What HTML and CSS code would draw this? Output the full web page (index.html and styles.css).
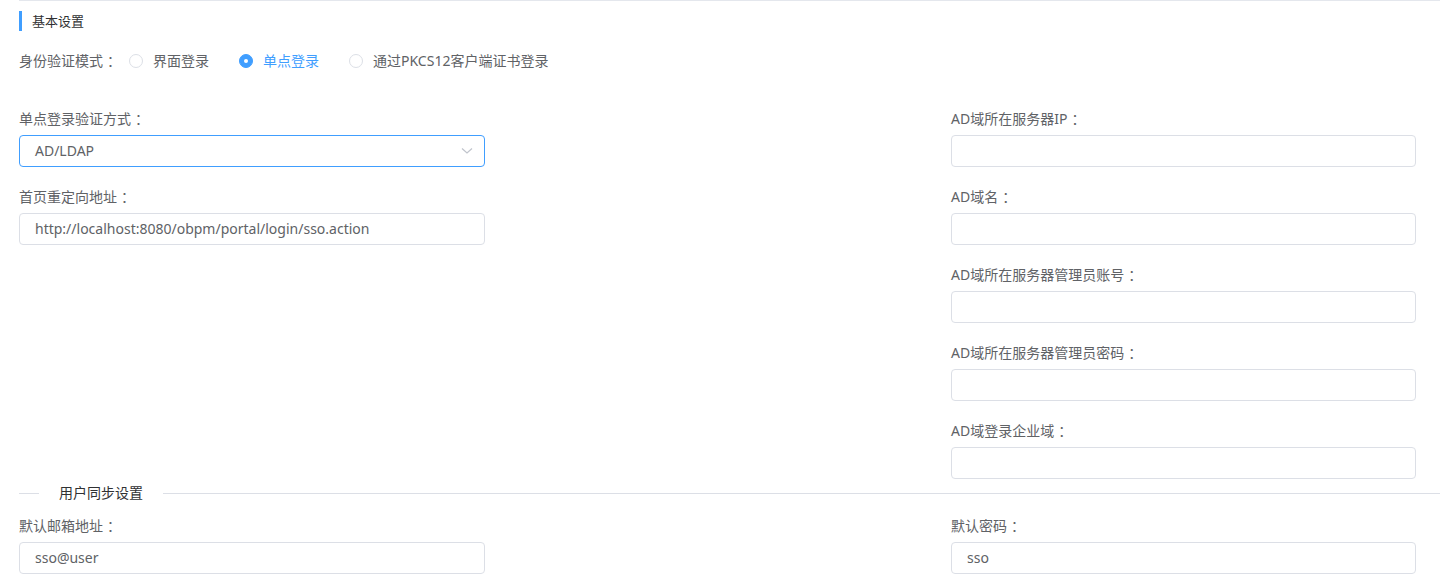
FILE: index.html
```html
<!DOCTYPE html>
<html lang="zh-CN">
<head>
<meta charset="UTF-8" />
<meta name="viewport" content="width=device-width, initial-scale=1" />
<title>基本设置</title>
<link rel="stylesheet" href="styles.css">
</head>
<body>
  <div class="page">
    <div class="panel">
      <h3 class="section-title">基本设置</h3>

      <div class="radio-row">
        <span class="radio-label">身份验证模式<span class="colon">：</span></span>
        <label class="radio">
          <span class="radio-inner"></span>
          <span class="radio-text">界面登录</span>
        </label>
        <label class="radio checked">
          <span class="radio-inner"></span>
          <span class="radio-text">单点登录</span>
        </label>
        <label class="radio">
          <span class="radio-inner"></span>
          <span class="radio-text">通过PKCS12客户端证书登录</span>
        </label>
      </div>

      <div class="form-grid">
        <div class="form-col">
          <div class="field">
            <div class="field-label">单点登录验证方式<span class="colon">：</span></div>
            <div class="select">
              <span>AD/LDAP</span>
              <svg class="select-arrow" width="12" height="8" viewBox="0 0 12 8">
                <path d="M1 1.5 L6 6 L11 1.5" fill="none" stroke="#c0c4cc" stroke-width="1.2"/>
              </svg>
            </div>
          </div>
          <div class="field">
            <div class="field-label">首页重定向地址<span class="colon">：</span></div>
            <div class="input">http://localhost:8080/obpm/portal/login/sso.action</div>
          </div>
        </div>

        <div class="form-col">
          <div class="field">
            <div class="field-label">AD域所在服务器IP<span class="colon">：</span></div>
            <div class="input"></div>
          </div>
          <div class="field">
            <div class="field-label">AD域名<span class="colon">：</span></div>
            <div class="input"></div>
          </div>
          <div class="field">
            <div class="field-label">AD域所在服务器管理员账号<span class="colon">：</span></div>
            <div class="input"></div>
          </div>
          <div class="field">
            <div class="field-label">AD域所在服务器管理员密码<span class="colon">：</span></div>
            <div class="input"></div>
          </div>
          <div class="field">
            <div class="field-label">AD域登录企业域<span class="colon">：</span></div>
            <div class="input"></div>
          </div>
        </div>
      </div>

      <div class="divider">
        <span class="divider-text">用户同步设置</span>
      </div>

      <div class="form-grid">
        <div class="form-col">
          <div class="field">
            <div class="field-label">默认邮箱地址<span class="colon">：</span></div>
            <div class="input">sso@user</div>
          </div>
        </div>
        <div class="form-col">
          <div class="field">
            <div class="field-label">默认密码<span class="colon">：</span></div>
            <div class="input">sso</div>
          </div>
        </div>
      </div>
    </div>
  </div>
</body>
</html>
```

FILE: styles.css
```css
body {
  margin: 0;
  padding: 0;
  background: #fff;
  font-family: "Noto Sans", "Noto Sans CJK SC", sans-serif;
  font-size: 14px;
  color: #606266;
}
.page {
  padding-left: 19px;
}
.panel {
  border-top: 1px solid #e4e7ed;
}

/* заголовок секції */
.section-title {
  margin: 10px 0 0 0;
  border-left: 3px solid #409eff;
  padding-left: 10px;
  height: 20px;
  line-height: 20px;
  font-size: 13px;
  font-weight: normal;
  color: #303133;
}

/* двокрапка по центру клітинки, як у YaHei */
.colon {
  padding-left: 4px;
  margin-right: -4px;
}

/* радіо */
.radio-row {
  display: flex;
  align-items: center;
  margin-top: 19px;
  height: 22px;
  line-height: 22px;
  white-space: nowrap;
}
.radio-label {
  flex-shrink: 0;
  margin-right: 12px;
}
.radio {
  display: flex;
  align-items: center;
  margin-right: 30px;
  cursor: pointer;
}
.radio-inner {
  box-sizing: border-box;
  width: 14px;
  height: 14px;
  border: 1px solid #dcdfe6;
  border-radius: 50%;
  position: relative;
}
.radio-text {
  padding-left: 10px;
}
.radio.checked .radio-inner {
  background: #409eff;
  border-color: #409eff;
}
.radio.checked .radio-inner::after {
  content: "";
  position: absolute;
  left: 4px;
  top: 4px;
  width: 4px;
  height: 4px;
  border-radius: 50%;
  background: #fff;
}
.radio.checked .radio-text {
  color: #409eff;
}

/* форма */
.form-grid {
  display: grid;
  grid-template-columns: 466px 465px;
  column-gap: 466px;
  margin-top: 36px;
}
.form-col {
  display: flex;
  flex-direction: column;
  gap: 19px;
}
.field-label {
  height: 22px;
  line-height: 22px;
  margin-bottom: 5px;
  white-space: nowrap;
}
.input,
.select {
  box-sizing: border-box;
  height: 32px;
  line-height: 30px;
  border: 1px solid #dcdfe6;
  border-radius: 4px;
  padding: 0 15px;
  color: #606266;
  background: #fff;
}
.select {
  display: flex;
  justify-content: space-between;
  align-items: center;
  border-color: #409eff;
  padding-right: 11px;
}

/* розділювач */
.divider {
  display: flex;
  align-items: center;
  margin: 3px 0 11px 0;
  height: 22px;
  line-height: 22px;
}
.divider::before,
.divider::after {
  content: "";
  height: 1px;
  background: #dcdfe6;
}
.divider::before {
  width: 20px;
}
.divider::after {
  flex: 1;
}
.divider-text {
  padding: 0 20px;
  color: #303133;
}
.divider + .form-grid {
  margin-top: 0;
}
```
